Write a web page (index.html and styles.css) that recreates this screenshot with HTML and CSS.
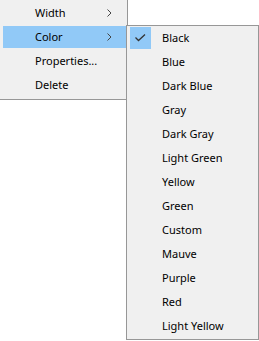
FILE: index.html
```
<!DOCTYPE html>
<html lang="en">
  <head>
    <meta charset="utf-8" />
    <link rel="stylesheet" href="styles.css">
  </head>
  <body>
    <div class="menus">
      <ul class="menu">
        <li class="item"><span class="icon"></span><span class="label">Width</span><svg class="arrow" width="5" height="8" viewBox="0 0 5 8"><polyline points="0.5,0.5 4,4 0.5,7.5" fill="none" stroke="#444" stroke-width="1"/></svg></li>
        <li class="item active"><span class="icon"></span><span class="label">Color</span><svg class="arrow" width="5" height="8" viewBox="0 0 5 8"><polyline points="0.5,0.5 4,4 0.5,7.5" fill="none" stroke="#444" stroke-width="1"/></svg></li>
        <li class="item"><span class="icon"></span><span class="label">Properties...</span></li>
        <li class="item"><span class="icon"></span><span class="label">Delete</span></li>
      </ul>
      <ul class="menu submenu">
        <li class="item"><span class="icon checked"><svg width="11" height="8" viewBox="0 0 11 8"><polyline points="0.5,3.5 3.5,6.5 10,0.5" fill="none" stroke="#333" stroke-width="1.3"/></svg></span><span class="label">Black</span></li>
        <li class="item"><span class="icon"></span><span class="label">Blue</span></li>
        <li class="item"><span class="icon"></span><span class="label">Dark Blue</span></li>
        <li class="item"><span class="icon"></span><span class="label">Gray</span></li>
        <li class="item"><span class="icon"></span><span class="label">Dark Gray</span></li>
        <li class="item"><span class="icon"></span><span class="label">Light Green</span></li>
        <li class="item"><span class="icon"></span><span class="label">Yellow</span></li>
        <li class="item"><span class="icon"></span><span class="label">Green</span></li>
        <li class="item"><span class="icon"></span><span class="label">Custom</span></li>
        <li class="item"><span class="icon"></span><span class="label">Mauve</span></li>
        <li class="item"><span class="icon"></span><span class="label">Purple</span></li>
        <li class="item"><span class="icon"></span><span class="label">Red</span></li>
        <li class="item"><span class="icon"></span><span class="label">Light Yellow</span></li>
      </ul>
    </div>
  </body>
</html>
```
FILE: styles.css
```
body {
  margin: 0;
  background: #fff;
  font-family: "Noto Sans", "Open Sans", sans-serif;
  font-size: 11px;
  color: #000;
}

.menus {
  display: flex;
  align-items: flex-start;
}

.menu {
  list-style: none;
  margin: -1px 0 0 -1px;
  padding: 2px 1px 3px 3px;
  width: 123px;
  background: #f0f0f0;
  border: 1px solid #979797;
  display: flex;
  flex-direction: column;
  gap: 2px;
  flex-shrink: 0;
}

.submenu {
  margin: 25px 0 0 -2px;
  padding: 1px 2px 2px 3px;
  width: 126px;
}

.item {
  height: 22px;
  display: flex;
  align-items: center;
}

.item.active {
  background: #91c9f7;
}

.icon {
  width: 21px;
  height: 22px;
  margin-right: 11px;
  display: flex;
  align-items: center;
  justify-content: center;
}

.icon.checked {
  background: #91c9f7;
}

.label {
  flex: 1;
  white-space: nowrap;
  padding-bottom: 2px;
}

.arrow {
  margin-right: 14px;
}
```
